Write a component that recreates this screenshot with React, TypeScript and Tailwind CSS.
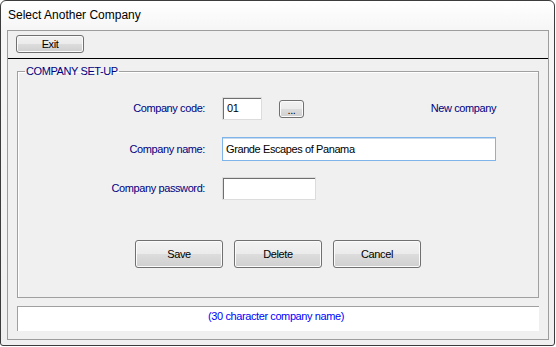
import React from 'react';

const btn =
  "rounded-[3px] border border-[#707070] bg-[linear-gradient(#f2f2f2_0%,#ebebeb_50%,#dddddd_50%,#cfcfcf_100%)] shadow-[inset_0_0_0_1px_#fbfbfb] text-black flex items-center justify-center";

const label = "w-[187px] shrink-0 text-right text-[#000080]";

export default function App() {
  return (
    <div className="w-[556px] h-[347px] bg-white font-['Liberation_Sans',Arial,sans-serif] text-[11px] tracking-[-0.4px]">
      <div className="w-[555px] h-[346px] flex flex-col rounded-t-[6px] rounded-b-[3px] border border-[#3c3c3c] bg-[linear-gradient(to_bottom,#ffffff_0%,#f6f6f6_8%,#f0f0f0_100%)] pl-[6px] pr-[5px] pb-[5px]">
        {/* Title bar */}
        <div className="h-[29px] shrink-0 flex items-center pl-[1px] pb-[1px] text-[12px] tracking-normal text-black">
          Select Another Company
        </div>

        {/* Client area */}
        <div className="flex-1 flex flex-col border border-[#9d9d9d] bg-[#f0f0f0]">
          {/* Toolbar */}
          <div className="h-[28px] shrink-0 border-b border-black pt-[4px] pl-[8px]">
            <button className={`${btn} w-[68px] h-[18px]`}>Exit</button>
          </div>

          {/* Group box */}
          <fieldset className="mx-[9px] mt-[6px] h-[233px] border border-[#a0a0a0] shadow-[inset_1px_1px_0_#ffffff] p-0 m-0">
            <legend className="ml-[7px] px-[1px] text-[#000080] leading-[13px]">COMPANY SET-UP</legend>

            <div className="flex flex-col">
              <div className="flex items-center w-[478px] h-[23px] mt-[19px]">
                <span className={label}>Company code:</span>
                <div className="ml-[17px] w-[40px] h-[23px] bg-white border border-[#dcdcdc] shadow-[inset_1px_1px_0_#6f6f6f] pl-[4px] flex items-center text-black">
                  01
                </div>
                <button className={`${btn} ml-[17px] w-[25px] h-[18px] items-end pb-[2px] leading-[10px]`}>...</button>
                <span className="ml-auto text-[#000080]">New company</span>
              </div>

              <div className="flex items-center w-[478px] h-[24px] mt-[17px]">
                <span className={label}>Company name:</span>
                <div className="ml-[17px] w-[274px] h-[24px] bg-white border border-[#7eb4ea] shadow-[inset_0_1px_0_#c5daed] pl-[3px] flex items-center text-black">
                  Grande Escapes of Panama
                </div>
              </div>

              <div className="flex items-center w-[478px] h-[23px] mt-[16px]">
                <span className={label}>Company password:</span>
                <div className="ml-[17px] w-[94px] h-[23px] bg-white border border-[#dcdcdc] shadow-[inset_1px_1px_0_#6f6f6f]" />
              </div>

              <div className="flex items-center mt-[40px] pl-[117px] gap-[11px]">
                <button className={`${btn} w-[88px] h-[28px]`}>Save</button>
                <button className={`${btn} w-[88px] h-[28px]`}>Delete</button>
                <button className={`${btn} w-[88px] h-[28px]`}>Cancel</button>
              </div>
            </div>
          </fieldset>

          {/* Status line */}
          <div className="mx-[9px] mt-[8px] h-[25px] bg-white border-t border-l border-[#a0a0a0] flex items-center justify-center pb-[5px] pr-[5px] text-[#0000ff]">
            (30 character company name)
          </div>
        </div>
      </div>
    </div>
  );
}
